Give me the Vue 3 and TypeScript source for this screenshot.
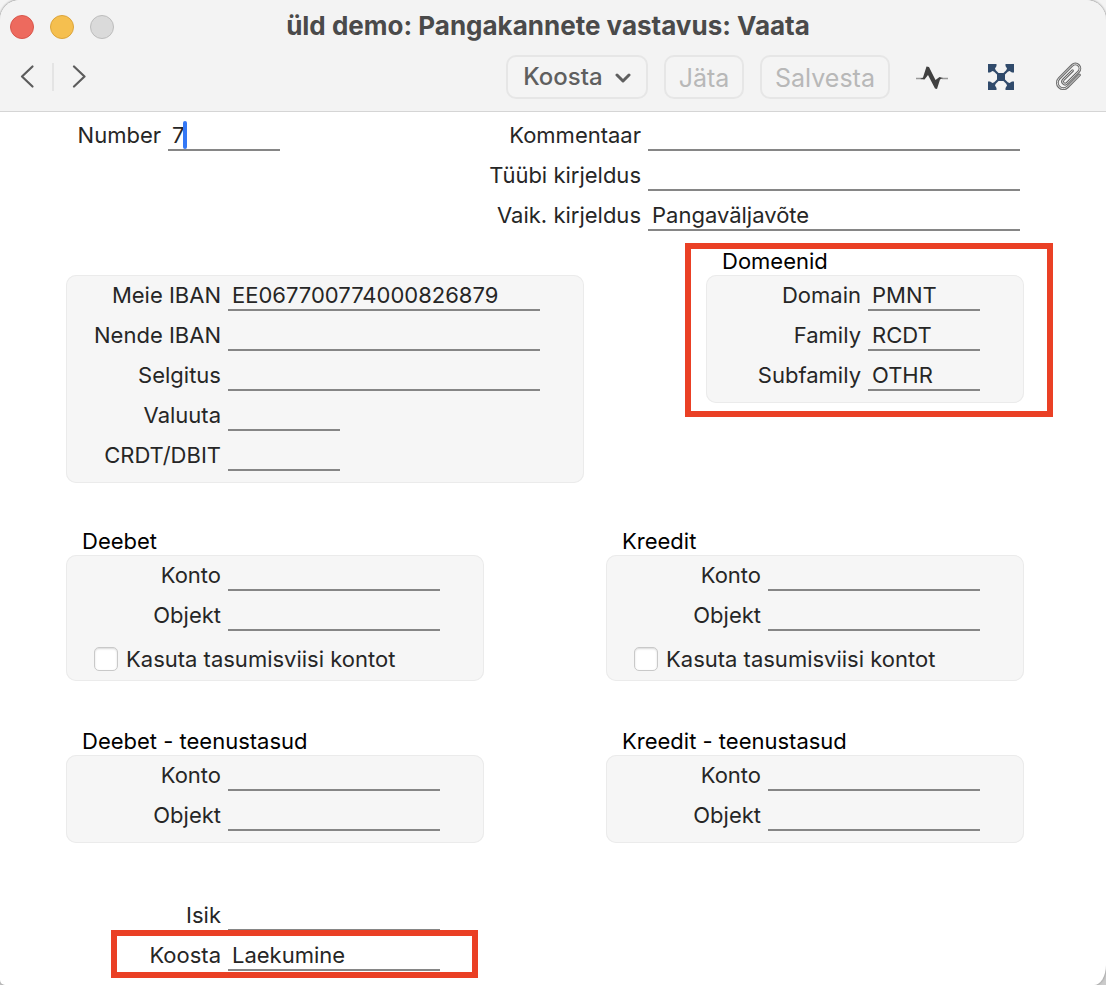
<script setup lang="ts">
import { reactive } from 'vue'

interface Field {
  id: string
  label: string
  short?: boolean
}

interface AccountGroup {
  id: string
  title: string
  checkbox?: boolean
}

const values = reactive<Record<string, string>>({
  number: '7',
  defaultText: 'Pangaväljavõte',
  ourIban: 'EE067700774000826879',
  domain: 'PMNT',
  family: 'RCDT',
  subfamily: 'OTHR',
  create: 'Laekumine',
})

const flags = reactive<Record<string, boolean>>({ debit: false, credit: false })

const descriptionFields: Field[] = [
  { id: 'comment', label: 'Kommentaar' },
  { id: 'typeText', label: 'Tüübi kirjeldus' },
  { id: 'defaultText', label: 'Vaik. kirjeldus' },
]

const matchFields: Field[] = [
  { id: 'ourIban', label: 'Meie IBAN' },
  { id: 'theirIban', label: 'Nende IBAN' },
  { id: 'explanation', label: 'Selgitus' },
  { id: 'currency', label: 'Valuuta', short: true },
  { id: 'crdtDbit', label: 'CRDT/DBIT', short: true },
]

const domainFields: Field[] = [
  { id: 'domain', label: 'Domain' },
  { id: 'family', label: 'Family' },
  { id: 'subfamily', label: 'Subfamily' },
]

const accountRows: AccountGroup[][] = [
  [
    { id: 'debit', title: 'Deebet', checkbox: true },
    { id: 'credit', title: 'Kreedit', checkbox: true },
  ],
  [
    { id: 'debitFee', title: 'Deebet - teenustasud' },
    { id: 'creditFee', title: 'Kreedit - teenustasud' },
  ],
]

const clipWire = 'M6-9V8a6 6 0 0 1-12 0v-18.500a4.500 4.500 0 0 1 9 0V6a2.500 2.500 0 0 1-5 0V-7'
</script>

<template>
  <div class="desktop">
    <main class="window">
      <header class="titlebar">
        <div class="title-row">
          <div class="lights">
            <button class="light close" type="button" aria-label="Sulge"></button>
            <button class="light minimise" type="button" aria-label="Minimeeri"></button>
            <button class="light zoom" type="button" aria-label="Suurenda" disabled></button>
          </div>
          <h1>üld demo: Pangakannete vastavus: Vaata</h1>
        </div>
        <div class="toolbar">
          <nav class="history">
            <button class="icon-button" type="button" aria-label="Eelmine">
              <svg width="16" height="26" viewBox="0 0 16 26"><path d="M12.500 2.500 2 12.500l10.500 10" fill="none" stroke="#5c5c5c" stroke-width="2.200" stroke-linecap="round" stroke-linejoin="round" /></svg>
            </button>
            <span class="divider"></span>
            <button class="icon-button" type="button" aria-label="Järgmine">
              <svg width="16" height="26" viewBox="0 0 16 26"><path d="m4 2.500 10.500 10L4 22.500" fill="none" stroke="#5c5c5c" stroke-width="2.200" stroke-linecap="round" stroke-linejoin="round" /></svg>
            </button>
          </nav>
          <div class="actions">
            <button class="action menu" type="button" aria-haspopup="menu">
              Koosta
              <svg width="16" height="12" viewBox="0 0 16 12"><path d="m2 4 6 6 6-6" fill="none" stroke="#5f5f5f" stroke-width="3" stroke-linecap="round" stroke-linejoin="round" /></svg>
            </button>
            <button class="action cancel" type="button" disabled>Jäta</button>
            <button class="action save" type="button" disabled>Salvesta</button>
          </div>
          <div class="tools">
            <button class="icon-button" type="button" aria-label="Tegevused">
              <svg width="32" height="32" viewBox="0 0 32 32">
                <path d="M0 17.500h6M26 17.500h6" stroke="#999" stroke-width="1.400" />
                <path d="M4 18l3-1.500L10.500 5.500 13 6l6.500 13 4-3 3.500 1-3 1.500-3 9.500-2-.5L12 14l-3.500 4.500z" fill="#404040" />
              </svg>
            </button>
            <button class="icon-button" type="button" aria-label="Lahter">
              <svg width="26" height="26" viewBox="0 0 26 26" fill="#304a6b">
                <path d="m4 4 18 18M22 4 4 22" stroke="#304a6b" stroke-width="2.200" />
                <path d="M0 0h8.500v2L7 4.500 7.500 6 6 7.500 4.500 7 2 8.500H0zM26 0v8.500h-2L21.500 7 20 7.500 18.500 6l.5-1.500L17.500 2V0zM0 26v-8.500h2L4.500 19l1.500-.5L7.500 20 7 21.500 8.500 24v2zM26 26h-8.500v-2l1.500-2.500-.5-1.500 1.500-1.500 1.500.5 2.500-1.500h2zM9 9h8v8H9z" />
              </svg>
            </button>
            <button class="icon-button" type="button" aria-label="Manused">
              <svg width="30" height="32" viewBox="0 0 30 32">
                <g transform="translate(15 16) rotate(45)" fill="none" stroke-linecap="round" stroke-linejoin="round">
                  <path :d="clipWire" stroke="#6a6a6a" stroke-width="2.800" />
                  <path :d="clipWire" stroke="#e4e4e4" stroke-width="0.900" />
                </g>
              </svg>
            </button>
          </div>
        </div>
      </header>

      <form class="form" @submit.prevent>
        <section class="top">
          <div class="rows">
            <div class="row number-row">
              <label for="number">Number</label>
              <span class="editing">
                <input id="number" v-model="values.number" type="text" />
                <span class="caret"></span>
              </span>
            </div>
          </div>
          <div class="rows descriptions">
            <div v-for="f in descriptionFields" :key="f.id" class="row">
              <label :for="f.id">{{ f.label }}</label>
              <input :id="f.id" v-model="values[f.id]" type="text" />
            </div>
          </div>
        </section>

        <section class="matching">
          <div class="panel">
            <div v-for="f in matchFields" :key="f.id" class="row">
              <label :for="f.id">{{ f.label }}</label>
              <input :id="f.id" v-model="values[f.id]" :class="{ short: f.short }" type="text" />
            </div>
          </div>
          <div class="group marked domains">
            <h2>Domeenid</h2>
            <div class="panel">
              <div v-for="f in domainFields" :key="f.id" class="row">
                <label :for="f.id">{{ f.label }}</label>
                <input :id="f.id" v-model="values[f.id]" type="text" />
              </div>
            </div>
          </div>
        </section>

        <section v-for="(groups, i) in accountRows" :key="i" class="pair">
          <div v-for="g in groups" :key="g.id" class="group">
            <h2>{{ g.title }}</h2>
            <div class="panel" :class="{ checked: g.checkbox }">
              <div class="row">
                <label :for="g.id + 'Account'">Konto</label>
                <input :id="g.id + 'Account'" v-model="values[g.id + 'Account']" type="text" />
              </div>
              <div class="row">
                <label :for="g.id + 'Object'">Objekt</label>
                <input :id="g.id + 'Object'" v-model="values[g.id + 'Object']" type="text" />
              </div>
              <label v-if="g.checkbox" class="check">
                <input v-model="flags[g.id]" type="checkbox" />
                Kasuta tasumisviisi kontot
              </label>
            </div>
          </div>
        </section>

        <section class="pair bottom">
          <div class="rows person">
            <div class="row">
              <label for="person">Isik</label>
              <input id="person" v-model="values.person" type="text" />
            </div>
            <div class="row marked create">
              <label for="create">Koosta</label>
              <input id="create" v-model="values.create" type="text" />
            </div>
          </div>
        </section>
      </form>
    </main>
  </div>
</template>

<style>
body {
  margin: 0;
}
</style>

<style scoped>
* {
  box-sizing: border-box;
}

.desktop {
  min-height: 100vh;
  background: linear-gradient(#f4f4f4 50%, #cbcbcb 50%);
  font-family: Inter, "Liberation Sans", sans-serif;
  font-size: 22px;
  color: #262626;
}

.window {
  min-height: 100vh;
  background: #fff;
  border-radius: 20px 20px 12px 5px / 20px 20px 20px 5px;
  box-shadow: 0 0 2px 1px #a8a8a8;
  overflow: hidden;
}

button {
  font: inherit;
  margin: 0;
}

.titlebar {
  height: 111px;
  background: #f3f3f3;
  box-shadow: 0 1px 0 #d5d5d5;
}

.title-row {
  display: grid;
  grid-template-columns: 114px 1fr 134px;
  align-items: center;
  height: 54px;
  margin-bottom: 1px;
  padding-left: 10px;
}

.lights {
  display: flex;
  gap: 16px;
}

.light {
  width: 24px;
  height: 24px;
  padding: 0;
  border: 1px solid;
  border-radius: 50%;
}

.close {
  background: #ed6a5e;
  border-color: #d8564b;
}

.minimise {
  background: #f5bf4f;
  border-color: #dba43b;
}

.zoom {
  background: #dadada;
  border-color: #bcbcbc;
}

h1 {
  margin: 0;
  padding-bottom: 2px;
  font-size: 26px;
  line-height: 32px;
  font-weight: 700;
  color: #4a4a4a;
  text-align: center;
  white-space: nowrap;
}

.toolbar {
  display: flex;
  align-items: center;
  height: 44px;
  padding: 0 22px 0 20px;
}

.history {
  display: flex;
  align-items: center;
  gap: 16px;
}

.icon-button {
  display: flex;
  padding: 0;
  border: 0;
  background: none;
}

.divider {
  width: 2px;
  height: 28px;
  background: #e4e4e4;
}

.actions {
  display: flex;
  gap: 16px;
  margin-left: auto;
}

.action {
  display: flex;
  align-items: center;
  justify-content: center;
  height: 44px;
  padding: 2px 0 0;
  border: 2px solid #e6e6e6;
  border-radius: 10px;
  background: #f4f4f4;
  font-size: 25px;
  line-height: 30px;
  color: #b8b8b8;
}

.menu {
  gap: 12px;
  width: 142px;
  padding: 0;
  color: #5f5f5f;
  font-weight: 500;
  font-size: 24px;
}

.cancel {
  width: 80px;
}

.save {
  width: 130px;
}

.tools {
  display: flex;
  align-items: center;
  gap: 40px;
  margin-left: 26px;
}

.form {
  padding: 4px 82px 14px 66px;
}

.top {
  display: grid;
  grid-template-columns: 420fr 538fr;
}

.rows,
.panel {
  display: flex;
  flex-direction: column;
  gap: 4px;
}

.descriptions {
  padding-right: 4px;
}

.row {
  display: flex;
  gap: 7px;
  height: 36px;
}

.row label {
  flex: 0 0 155px;
  text-align: right;
  line-height: 32px;
  padding-top: 4px;
  white-space: nowrap;
}

.row input {
  flex: 1;
  min-width: 0;
  width: 100%;
  height: 36px;
  padding: 6px 4px 0;
  border: 0;
  border-bottom: 2px solid #868686;
  border-radius: 0;
  background: transparent;
  font: inherit;
  line-height: 28px;
  color: inherit;
  outline: none;
}

.row input.short {
  flex: 0 0 112px;
}

.number-row label {
  flex-basis: 95px;
}

.editing {
  position: relative;
  width: 112px;
}

.caret {
  position: absolute;
  left: 15px;
  top: 6px;
  width: 4px;
  height: 28px;
  border-radius: 2px;
  background: #3478f6;
}

.matching {
  display: grid;
  grid-template-columns: 518fr 318fr;
  gap: 122px;
  margin-top: 16px;
}

.matching > .panel {
  margin-top: 28px;
}

.panel {
  padding: 0 44px 12px 0;
  border-radius: 10px;
  background: #f6f6f6;
  box-shadow: inset 0 0 0 1px #ebebeb;
}

.panel.checked {
  padding-bottom: 4px;
}

.domains {
  align-self: start;
}

h2 {
  margin: 0;
  padding-left: 16px;
  font-size: 22px;
  line-height: 28px;
  font-weight: 400;
  color: #000;
}

.pair {
  display: grid;
  grid-template-columns: 1fr 1fr;
  gap: 122px;
  margin-top: 44px;
}

.pair + .pair {
  margin-top: 46px;
}

.pair.bottom {
  margin-top: 52px;
}

.person .row {
  padding-right: 44px;
}

.check {
  display: flex;
  align-items: center;
  gap: 8px;
  height: 36px;
  margin: 6px -44px 0 0;
  padding-left: 28px;
  white-space: nowrap;
}

.check input {
  appearance: none;
  width: 24px;
  height: 24px;
  margin: 0;
  border: 1px solid #c9c9c9;
  border-radius: 5px;
  background: #fff;
  box-shadow: inset 0 1px 2px #d8d8d8;
}

.check input:checked {
  background: #3478f6;
}

.marked {
  position: relative;
}

.marked::after {
  content: "";
  position: absolute;
  border: 6px solid #ea4025;
  pointer-events: none;
}

.domains::after {
  inset: -4px -29px -14px -21px;
}

.create::after {
  inset: -5px 6px -7px 45px;
}
</style>
